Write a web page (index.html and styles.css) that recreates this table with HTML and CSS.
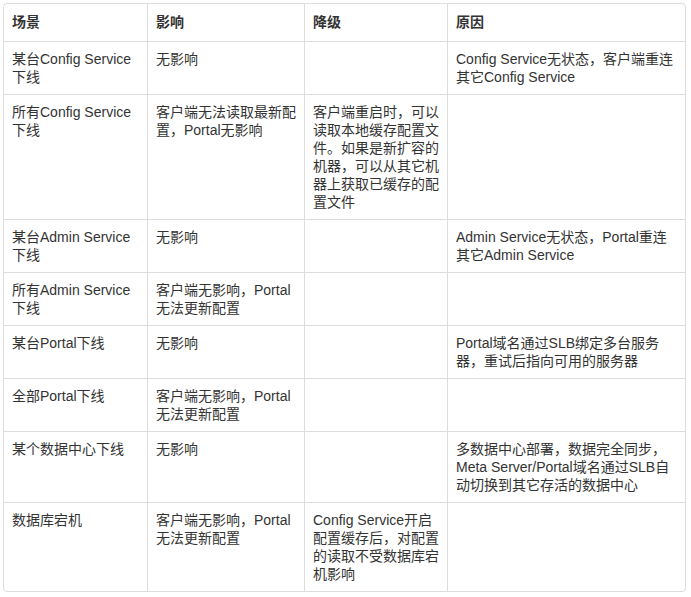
FILE: index.html
```html
<!DOCTYPE html>
<html lang="zh-CN">
<head>
<meta charset="utf-8">
<title>故障场景</title>
<link rel="stylesheet" href="styles.css">
</head>
<body>
<div class="wrap">
<table class="grid">
<thead>
<tr><th class="c1">场景</th><th class="c2">影响</th><th class="c3">降级</th><th class="c4">原因</th></tr>
</thead>
<tbody>
<tr><td>某台Config Service下线</td><td>无影响</td><td></td><td>Config Service无状态，客户端重连其它Config Service</td></tr>
<tr><td>所有Config Service下线</td><td>客户端无法读取最新配置，Portal无影响</td><td>客户端重启时，可以读取本地缓存配置文件。如果是新扩容的机器，可以从其它机器上获取已缓存的配置文件</td><td></td></tr>
<tr><td>某台Admin Service下线</td><td>无影响</td><td></td><td>Admin Service无状态，Portal重连其它Admin Service</td></tr>
<tr><td>所有Admin Service下线</td><td>客户端无影响，Portal无法更新配置</td><td></td><td></td></tr>
<tr><td>某台Portal下线</td><td>无影响</td><td></td><td>Portal域名通过SLB绑定多台服务器，重试后指向可用的服务器</td></tr>
<tr><td>全部Portal下线</td><td>客户端无影响，Portal无法更新配置</td><td></td><td></td></tr>
<tr><td>某个数据中心下线</td><td>无影响</td><td></td><td>多数据中心部署，数据完全同步，Meta Server/Portal域名通过SLB自动切换到其它存活的数据中心</td></tr>
<tr><td>数据库宕机</td><td>客户端无影响，Portal无法更新配置</td><td>Config Service开启配置缓存后，对配置的读取不受数据库宕机影响</td><td></td></tr>
</tbody>
</table>
</div>
</body>
</html>
```
FILE: styles.css
```css
html, body {
  margin: 0;
  padding: 0;
  background: #fff;
}
.wrap {
  padding: 3px;
}
.grid {
  box-sizing: border-box;
  width: 683px;
  table-layout: fixed;
  border-collapse: separate;
  border-spacing: 0;
  border: 1px solid #dddddd;
  border-radius: 4px;
  font-family: "Liberation Sans", "Noto Sans CJK SC", sans-serif;
  font-size: 14px;
  line-height: 18px;
  color: #333333;
}
.grid th,
.grid td {
  box-sizing: border-box;
  padding: 8px;
  text-align: left;
  vertical-align: top;
  border-left: 1px solid #dddddd;
  border-top: 1px solid #dddddd;
  word-break: normal;
}
.grid th {
  font-weight: bold;
  border-top: 0;
  padding-top: 9px;
  padding-bottom: 10px;
}
.grid th:first-child,
.grid td:first-child {
  border-left: 0;
}
.c1 { width: 143px; }
.c2 { width: 157px; }
.c3 { width: 143px; }
.c4 { width: 238px; }
```
